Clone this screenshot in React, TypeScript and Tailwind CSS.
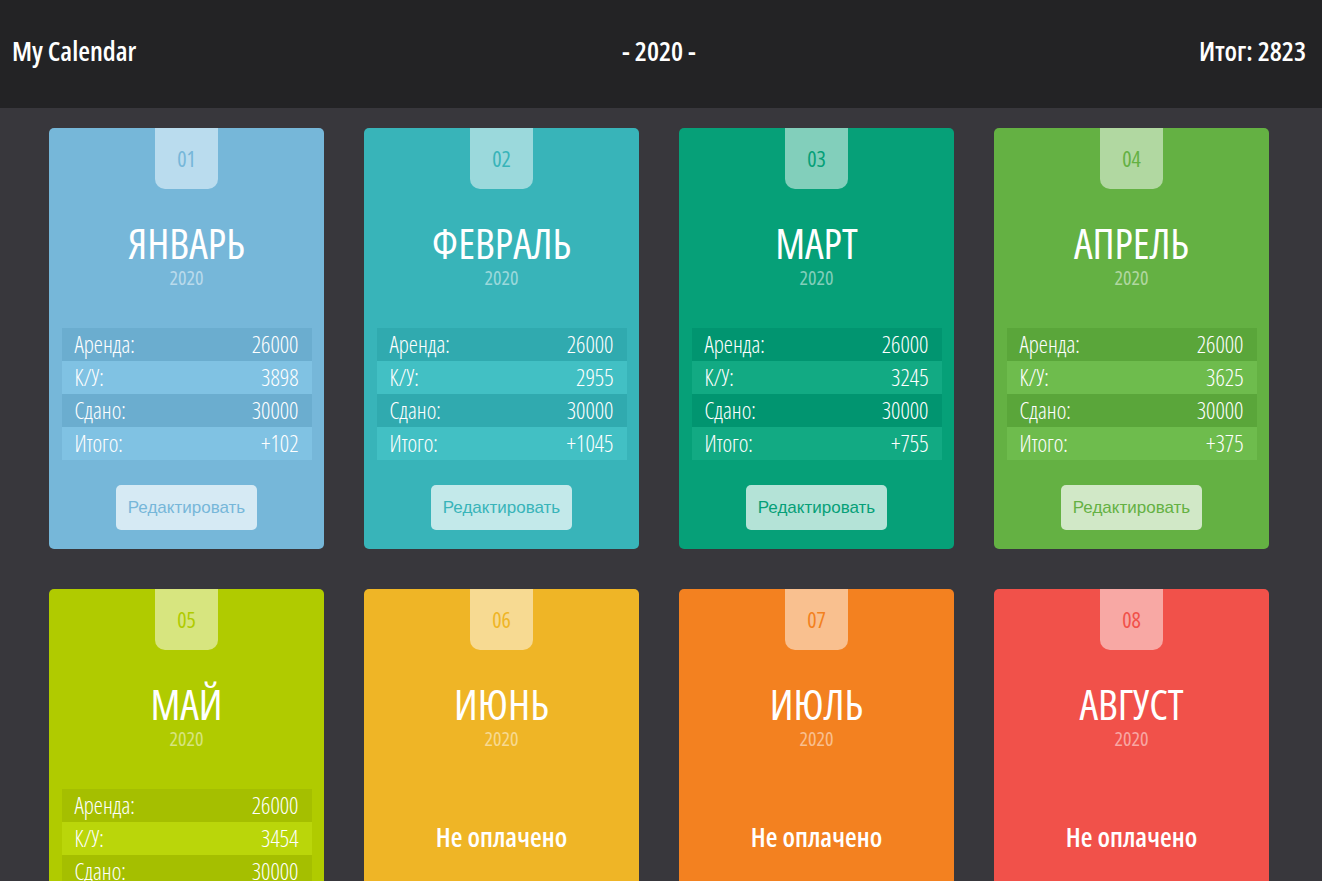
import React from 'react';

type Month = {
  num: string;
  name: string;
  bg: string;
  tab: string;
  text: string;
  rowDark: string;
  rowLight: string;
  data?: { rent: number; ku: number; paid: number; total: string };
};

const months: Month[] = [
  { num: '01', name: 'Январь', bg: 'bg-[#76b7d9]', tab: 'bg-[#badcee]', text: 'text-[#76b7d9]', rowDark: 'bg-[#6badcf]', rowLight: 'bg-[#80c2e3]', data: { rent: 26000, ku: 3898, paid: 30000, total: '+102' } },
  { num: '02', name: 'Февраль', bg: 'bg-[#38b4b9]', tab: 'bg-[#9bd9dc]', text: 'text-[#38b4b9]', rowDark: 'bg-[#30aaaf]', rowLight: 'bg-[#42c0c4]', data: { rent: 26000, ku: 2955, paid: 30000, total: '+1045' } },
  { num: '03', name: 'Март', bg: 'bg-[#06a078]', tab: 'bg-[#82cfbb]', text: 'text-[#06a078]', rowDark: 'bg-[#019570]', rowLight: 'bg-[#12aa83]', data: { rent: 26000, ku: 3245, paid: 30000, total: '+755' } },
  { num: '04', name: 'Апрель', bg: 'bg-[#64b143]', tab: 'bg-[#b1d8a1]', text: 'text-[#64b143]', rowDark: 'bg-[#5aa63a]', rowLight: 'bg-[#6ebc4d]', data: { rent: 26000, ku: 3625, paid: 30000, total: '+375' } },
  { num: '05', name: 'Май', bg: 'bg-[#b0cb00]', tab: 'bg-[#d7e57f]', text: 'text-[#b0cb00]', rowDark: 'bg-[#a5bf00]', rowLight: 'bg-[#bad60a]', data: { rent: 26000, ku: 3454, paid: 30000, total: '+546' } },
  { num: '06', name: 'Июнь', bg: 'bg-[#efb526]', tab: 'bg-[#f7da92]', text: 'text-[#efb526]', rowDark: 'bg-[#e3aa1e]', rowLight: 'bg-[#f6be33]' },
  { num: '07', name: 'Июль', bg: 'bg-[#f38120]', tab: 'bg-[#f9c08f]', text: 'text-[#f38120]', rowDark: 'bg-[#e67619]', rowLight: 'bg-[#f88c2e]' },
  { num: '08', name: 'Август', bg: 'bg-[#f1514a]', tab: 'bg-[#f8a8a4]', text: 'text-[#f1514a]', rowDark: 'bg-[#e54741]', rowLight: 'bg-[#f55c55]' },
];

// Open Sans squeezed to its narrowest width
const cond = { fontFamily: '"Open Sans", "Liberation Sans Narrow", sans-serif', fontStretch: '75%' };

function MonthCard({ m }: { m: Month }) {
  const rows = m.data
    ? [
        ['Аренда:', m.data.rent],
        ['К/У:', m.data.ku],
        ['Сдано:', m.data.paid],
        ['Итого:', m.data.total],
      ]
    : [];
  return (
    <div className={`${m.bg} rounded-[5px] h-[421px] flex flex-col items-center text-white`} style={cond}>
      <div className={`${m.tab} ${m.text} w-[63px] h-[61px] rounded-b-[10px] flex items-center justify-center text-[22px] font-normal`}>
        {m.num}
      </div>
      <div className="mt-[27px] text-[42px] leading-[54px] uppercase font-normal">{m.name}</div>
      <div className="-mt-[3px] text-[20px] leading-[22px] text-white/50 font-normal">2020</div>
      {m.data ? (
        <>
          <div className="mt-[39px] w-[250px] flex flex-col">
            {rows.map(([label, value], i) => (
              <div
                key={label as string}
                className={`${i % 2 === 0 ? m.rowDark : m.rowLight} h-[33px] px-[13px] flex items-center justify-between text-[23px] font-light`}
              >
                <span>{label}</span>
                <span>{value}</span>
              </div>
            ))}
          </div>
          <button
            className={`mt-[25px] w-[141px] h-[45px] rounded-[5px] bg-white/70 ${m.text} text-[17px]`}
            style={{ fontFamily: '"Liberation Sans", Arial, sans-serif' }}
          >
            Редактировать
          </button>
        </>
      ) : (
        <div className="mt-[67px] text-[27px] font-semibold">Не оплачено</div>
      )}
    </div>
  );
}

export default function App() {
  return (
    <div className="min-h-screen bg-[#38373c]">
      <header
        className="h-[108px] bg-[#232325] flex items-center justify-between pl-[12px] pr-[16px] pb-[6px] text-white text-[27px] font-semibold"
        style={cond}
      >
        <span className="w-[300px]">My Calendar</span>
        <span>- 2020 -</span>
        <span className="w-[300px] text-right">Итог: 2823</span>
      </header>
      <main className="grid grid-cols-[repeat(4,275px)] gap-[40px] pl-[49px] pt-[20px] pb-[40px]">
        {months.map((m) => (
          <MonthCard key={m.num} m={m} />
        ))}
      </main>
    </div>
  );
}
